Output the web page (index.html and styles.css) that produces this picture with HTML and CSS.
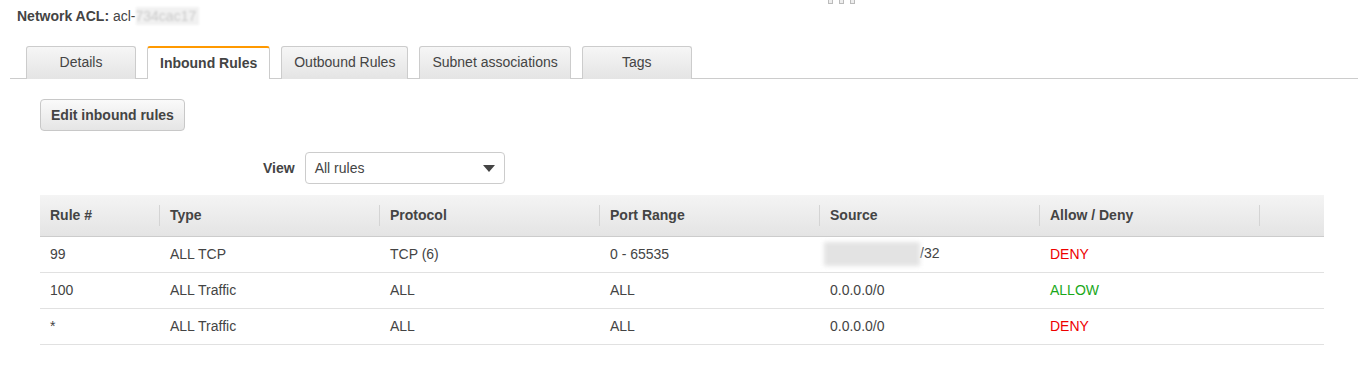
FILE: index.html
```html
<!DOCTYPE html>
<html lang="en">
<head>
    <meta charset="UTF-8">
    <title>Network ACL</title>
    <link rel="stylesheet" href="styles.css">
</head>
<body>
    <div class="grip"><span></span><span></span><span></span></div>

    <div class="acl-title">
        <strong>Network ACL:</strong> acl-<span class="masked">734cac17</span>
    </div>

    <div class="tabs">
        <div class="tab">Details</div>
        <div class="tab active">Inbound Rules</div>
        <div class="tab">Outbound Rules</div>
        <div class="tab">Subnet associations</div>
        <div class="tab">Tags</div>
    </div>

    <div class="panel">
        <button class="btn">Edit inbound rules</button>

        <div class="view-row">
            <label class="view-label">View</label>
            <div class="select">
                <span>All rules</span>
                <svg width="12" height="7" viewBox="0 0 12 7"><path d="M0 0h12L6 7z" fill="#444"/></svg>
            </div>
        </div>

        <table class="rules">
            <thead>
                <tr>
                    <th class="c-num">Rule #</th>
                    <th>Type</th>
                    <th>Protocol</th>
                    <th>Port Range</th>
                    <th>Source</th>
                    <th>Allow / Deny</th>
                    <th class="c-end"></th>
                </tr>
            </thead>
            <tbody>
                <tr>
                    <td>99</td>
                    <td>ALL TCP</td>
                    <td>TCP (6)</td>
                    <td>0 - 65535</td>
                    <td><span class="ip-mask"></span>/32</td>
                    <td class="deny">DENY</td>
                    <td></td>
                </tr>
                <tr>
                    <td>100</td>
                    <td>ALL Traffic</td>
                    <td>ALL</td>
                    <td>ALL</td>
                    <td>0.0.0.0/0</td>
                    <td class="allow">ALLOW</td>
                    <td></td>
                </tr>
                <tr>
                    <td>*</td>
                    <td>ALL Traffic</td>
                    <td>ALL</td>
                    <td>ALL</td>
                    <td>0.0.0.0/0</td>
                    <td class="deny">DENY</td>
                    <td></td>
                </tr>
            </tbody>
        </table>
    </div>
</body>
</html>
```

FILE: styles.css
```css
body {
    margin: 0;
    font-family: "Liberation Sans", Arial, sans-serif;
    font-size: 14px;
    color: #444;
    background: #fff;
}

/* resize grip at the top */
.grip {
    position: absolute;
    left: 828px;
    top: 0;
    display: flex;
    gap: 6px;
}
.grip span {
    width: 3px;
    height: 3px;
    border: 1px solid #bbb;
    border-top: none;
    background: #eee;
}

.acl-title {
    padding: 7px 17px 0;
    line-height: 18px;
    height: 21px;
}
.acl-title strong { color: #444; }
.masked {
    display: inline-block;
    background: #f1f1f1;
    color: #c9c9c9;
    padding: 0 3px 0 0;
    filter: blur(0.8px);
}

.tabs {
    display: flex;
    gap: 11px;
    margin: 18px 0 0 10px;
    padding-left: 16px;
    border-bottom: 1px solid #ccc;
    height: 32px;
}
.tab {
    min-width: 110px;
    box-sizing: border-box;
    height: 33px;
    padding: 0 12px;
    border: 1px solid #ccc;
    border-bottom: none;
    border-radius: 3px 3px 0 0;
    background: linear-gradient(#f6f6f6, #e4e4e4);
    text-align: center;
    line-height: 31px;
}
.tab.active {
    background: #fff;
    border-top: 2px solid #f90;
    line-height: 30px;
    font-weight: bold;
}

.panel {
    padding: 20px 34px 0 40px;
}

.btn {
    font-family: inherit;
    font-size: 14px;
    font-weight: bold;
    color: #444;
    height: 32px;
    padding: 0 10px;
    border: 1px solid #c8c8c8;
    border-radius: 4px;
    background: linear-gradient(#fafafa, #e5e5e5);
}

.view-row {
    display: flex;
    align-items: center;
    gap: 10px;
    margin: 21px 0 0 223px;
}
.view-label { font-weight: bold; }
.select {
    width: 200px;
    height: 32px;
    box-sizing: border-box;
    border: 1px solid #ccc;
    border-radius: 4px;
    padding: 0 9px 0 9px;
    display: flex;
    align-items: center;
    justify-content: space-between;
}

.rules {
    margin-top: 11px;
    width: 1284px;
    border-collapse: collapse;
    table-layout: fixed;
}
.rules th {
    position: relative;
    box-sizing: border-box;
    width: 220px;
    height: 41px;
    padding: 0 10px;
    text-align: left;
    font-weight: bold;
    background: linear-gradient(#f4f4f4, #e4e4e4);
    border-bottom: 1px solid #ccc;
}
.rules th.c-num { width: 120px; }
.rules th.c-end { width: auto; }
.rules th::after {
    content: "";
    position: absolute;
    right: 0;
    top: 10px;
    height: 21px;
    border-right: 1px solid #d4d4d4;
}
.rules th.c-end::after { display: none; }
.rules td {
    height: 35px;
    padding: 0 10px;
    border-bottom: 1px solid #e1e1e1;
}
.ip-mask {
    display: inline-block;
    vertical-align: middle;
    width: 96px;
    height: 24px;
    margin-left: -6px;
    background: #e3e3e3;
    filter: blur(2px);
}
.deny { color: #e00; }
.allow { color: #1aa81a; }
```
